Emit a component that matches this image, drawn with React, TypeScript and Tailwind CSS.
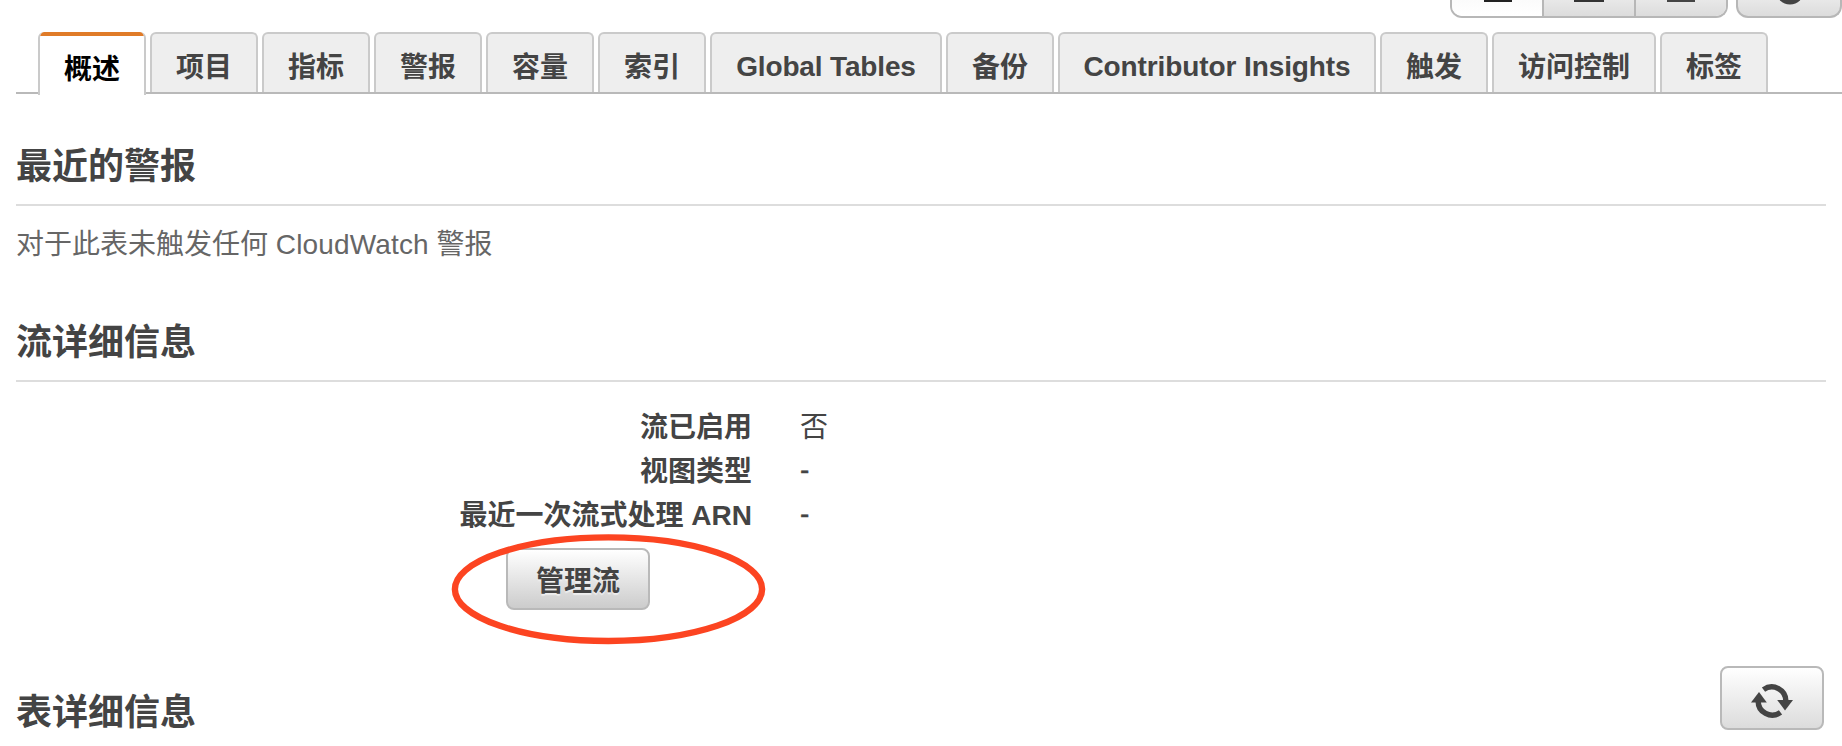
import React from 'react';

type Tab = { label: string; className: string };

const tabs: Tab[] = [
  { label: '项目', className: 'w-[108px] pt-[14px]' },
  { label: '指标', className: 'w-[108px] pt-[14px]' },
  { label: '警报', className: 'w-[108px] pt-[14px]' },
  { label: '容量', className: 'w-[108px] pt-[14px]' },
  { label: '索引', className: 'w-[108px] pt-[14px]' },
  { label: 'Global Tables', className: 'w-[232px] pt-[13px] tracking-[-0.15px]' },
  { label: '备份', className: 'w-[108px] pt-[14px]' },
  { label: 'Contributor Insights', className: 'w-[318px] pt-[13px] tracking-[-0.1px]' },
  { label: '触发', className: 'w-[108px] pt-[14px]' },
  { label: '访问控制', className: 'w-[164px] pt-[14px]' },
  { label: '标签', className: 'w-[108px] pt-[14px]' },
];

const details = [
  { label: '流已启用', value: '否' },
  { label: '视图类型', value: '-' },
  { label: '最近一次流式处理 ARN', value: '-' },
];

function Toolbar() {
  return (
    <div className="flex h-[18px] gap-2 pl-[1450px]">
      <div className="flex h-[18px] w-[278px] overflow-hidden rounded-b-xl border-2 border-t-0 border-[#b7b7b7]">
        <div className="flex w-[90px] justify-center bg-linear-to-b from-[#fbfbfb] to-white pl-[2px]">
          <span className="h-[2px] w-7 bg-[#222]" />
        </div>
        <div className="flex w-[92px] justify-center border-l-2 border-[#b7b7b7] bg-linear-to-b from-[#e8e8e8] to-[#dcdcdc]">
          <span className="h-[2px] w-[30px] bg-[#333]" />
        </div>
        <div className="flex w-[92px] justify-center border-l-2 border-[#b7b7b7] bg-linear-to-b from-[#e8e8e8] to-[#dcdcdc]">
          <span className="h-[2px] w-7 bg-[#444]" />
        </div>
      </div>
      <div className="flex h-[18px] w-[106px] justify-center overflow-hidden rounded-b-xl border-2 border-t-0 border-[#b7b7b7] bg-linear-to-b from-[#e8e8e8] to-[#dcdcdc] pl-[2px]">
        <svg width="28" height="6" viewBox="0 0 28 6">
          <circle cx="14" cy="-9.5" r="14" fill="#444" />
        </svg>
      </div>
    </div>
  );
}

function Tabs() {
  return (
    <div className="mt-[14px] ml-4 flex h-[64px] items-start">
      <div className="h-[62px] w-[22px] border-b-2 border-[#b9b9b9]" />
      <div className="h-[63px] w-[108px] overflow-hidden rounded-t-md border-x-2 border-[#cacaca] bg-white">
        <div className="-mx-px h-1 rounded-t-[4px] bg-[#e07b28]" />
        <div className="pt-[14px] text-center leading-10 font-bold text-black">概述</div>
      </div>
      <div className="flex h-[62px] flex-1 gap-1 border-b-2 border-[#b9b9b9] pl-1">
        {tabs.map((tab) => (
          <div
            key={tab.label}
            className={`${tab.className} h-[60px] shrink-0 rounded-t-md border-2 border-b-0 border-[#cacaca] bg-[#eee] text-center leading-10 font-bold whitespace-nowrap`}
          >
            {tab.label}
          </div>
        ))}
      </div>
    </div>
  );
}

function Heading({ children }: { children: React.ReactNode }) {
  return <h2 className="pt-[2px] text-[36px] leading-[54px] font-bold text-[#444]">{children}</h2>;
}

function RefreshIcon() {
  return (
    <svg width="42" height="38" viewBox="0 0 42 38" fill="none">
      <path d="M12.5 7.6A14 14 0 0 1 34.8 19.5" stroke="#444" strokeWidth="5.4" />
      <path d="M26.2 18H42L34 28.5Z" fill="#444" />
      <path d="M29.5 30.4A14 14 0 0 1 7.2 18.5" stroke="#444" strokeWidth="5.4" />
      <path d="M0 20.5H15.8L8 10Z" fill="#444" />
    </svg>
  );
}

export default function App() {
  return (
    <div className="h-[746px] w-[1842px] overflow-hidden bg-white font-['Liberation_Sans','Noto_Sans_CJK_SC',sans-serif] text-[28px] text-[#444]">
      <Toolbar />
      <Tabs />
      <main className="pr-4 pl-4">
        <section className="h-[176px] pt-[42px]">
          <div className="h-[68px] border-b-2 border-[#ddd]">
            <Heading>最近的警报</Heading>
          </div>
          <p className="pt-[19px] leading-10 text-[#666]">
            对于此表未触发任何 <span className="tracking-[0.15px]">CloudWatch</span> 警报
          </p>
        </section>
        <section className="h-[394px] pt-[42px]">
          <div className="h-[68px] border-b-2 border-[#ddd]">
            <Heading>流详细信息</Heading>
          </div>
          <dl className="pt-6">
            {details.map((row) => (
              <div key={row.label} className="flex h-11 gap-12 leading-[44px]">
                <dt className="w-[736px] text-right font-bold">{row.label}</dt>
                <dd className={row.value === '-' ? '-mt-[2px] [-webkit-text-stroke:0.4px_#444]' : ''}>{row.value}</dd>
              </div>
            ))}
          </dl>
          <div className="relative mt-[10px] ml-[490px] h-[62px] w-[144px]">
            <button className="h-[62px] w-[144px] rounded-lg border-2 border-[#b9b9b9] bg-linear-to-b from-white to-[#ccc] pt-1 leading-[56px] font-bold [text-shadow:0_2px_1px_#eee]">
              管理流
            </button>
            <svg className="absolute -top-[14px] -left-[55px]" width="315" height="111" viewBox="0 0 315 111">
              <ellipse cx="157.5" cy="55.2" rx="153.6" ry="51.8" fill="none" stroke="#fc4421" strokeWidth="6.4" />
            </svg>
          </div>
        </section>
        <section className="flex items-start justify-between pr-[2px]">
          <div className="pt-[18px]">
            <Heading>表详细信息</Heading>
          </div>
          <button className="flex h-16 w-[104px] items-center justify-center rounded-lg border-2 border-[#b9b9b9] bg-linear-to-b from-white to-[#dcdcdc] pt-[6px]">
            <RefreshIcon />
          </button>
        </section>
      </main>
    </div>
  );
}
